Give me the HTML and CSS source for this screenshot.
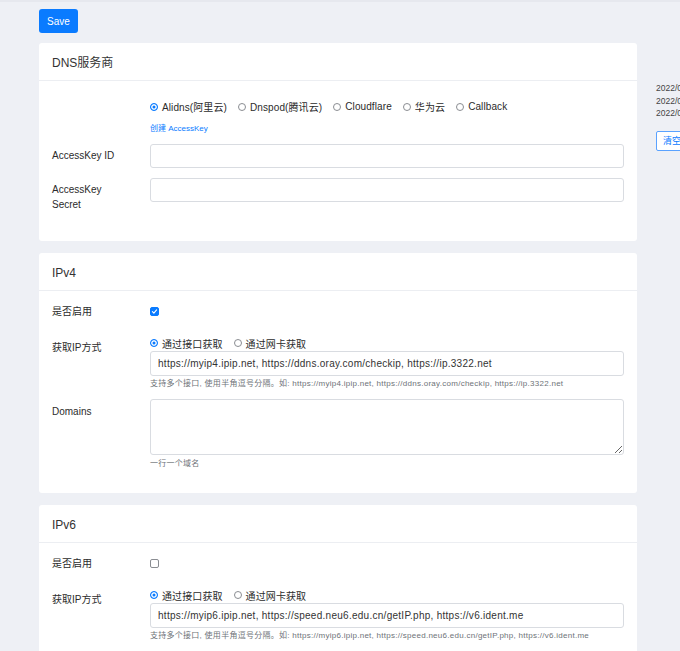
FILE: index.html
```html
<!DOCTYPE html>
<html lang="zh-CN">
<head>
<meta charset="utf-8">
<title>DDNS-GO</title>
<link rel="stylesheet" href="styles.css">
</head>
<body>
<div class="page">
  <div class="toolbar">
    <button class="btn-save" type="button">Save</button>
  </div>
  <div class="layout">
    <main class="main">
      <section class="card">
        <div class="card-header">DNS服务商</div>
        <div class="card-body">
          <div class="row">
            <div class="label"></div>
            <div class="field field-pad">
              <div class="choices">
                <label class="choice"><span class="radio checked"></span>Alidns(阿里云)</label>
                <label class="choice"><span class="radio"></span>Dnspod(腾讯云)</label>
                <label class="choice"><span class="radio"></span>Cloudflare</label>
                <label class="choice"><span class="radio"></span>华为云</label>
                <label class="choice"><span class="radio"></span>Callback</label>
              </div>
              <a class="link" href="#">创建 AccessKey</a>
            </div>
          </div>
          <div class="row">
            <div class="label">AccessKey ID</div>
            <div class="field"><input class="input" type="text"></div>
          </div>
          <div class="row">
            <div class="label">AccessKey Secret</div>
            <div class="field"><input class="input" type="password"></div>
          </div>
        </div>
      </section>

      <section class="card">
        <div class="card-header">IPv4</div>
        <div class="card-body">
          <div class="row row-check">
            <div class="label">是否启用</div>
            <div class="field field-check"><span class="checkbox checked"><svg viewBox="0 0 10 10" width="7" height="7"><path d="M2 5.2 L4.1 7.2 L8 2.8" fill="none" stroke="#fff" stroke-width="1.6" stroke-linecap="round" stroke-linejoin="round"/></svg></span></div>
          </div>
          <div class="row">
            <div class="label">获取IP方式</div>
            <div class="field">
              <div class="choices">
                <label class="choice"><span class="radio checked"></span>通过接口获取</label>
                <label class="choice"><span class="radio"></span>通过网卡获取</label>
              </div>
              <input class="input input-tall" type="text" value="https://myip4.ipip.net, https://ddns.oray.com/checkip, https://ip.3322.net">
              <div class="help">支持多个接口, 使用半角逗号分隔。如: https://myip4.ipip.net, https://ddns.oray.com/checkip, https://ip.3322.net</div>
            </div>
          </div>
          <div class="row">
            <div class="label">Domains</div>
            <div class="field">
              <textarea class="textarea"></textarea>
              <div class="help">一行一个域名</div>
            </div>
          </div>
        </div>
      </section>

      <section class="card">
        <div class="card-header">IPv6</div>
        <div class="card-body">
          <div class="row row-check">
            <div class="label">是否启用</div>
            <div class="field field-check"><span class="checkbox"></span></div>
          </div>
          <div class="row">
            <div class="label">获取IP方式</div>
            <div class="field">
              <div class="choices">
                <label class="choice"><span class="radio checked"></span>通过接口获取</label>
                <label class="choice"><span class="radio"></span>通过网卡获取</label>
              </div>
              <input class="input input-tall" type="text" value="https://myip6.ipip.net, https://speed.neu6.edu.cn/getIP.php, https://v6.ident.me">
              <div class="help">支持多个接口, 使用半角逗号分隔。如: https://myip6.ipip.net, https://speed.neu6.edu.cn/getIP.php, https://v6.ident.me</div>
            </div>
          </div>
          <div class="row">
            <div class="label">Domains</div>
            <div class="field">
              <textarea class="textarea"></textarea>
              <div class="help">一行一个域名</div>
            </div>
          </div>
        </div>
      </section>
    </main>

    <aside class="side">
      <div class="log">
        <div class="log-line">2022/04/02 15:30:21 你的IPv4未改变, 未触发请求</div>
        <div class="log-line">2022/04/02 15:35:21 你的IPv4未改变, 未触发请求</div>
        <div class="log-line">2022/04/02 15:40:21 你的IPv4未改变, 未触发请求</div>
      </div>
      <button class="btn-clear" type="button">清空日志</button>
    </aside>
  </div>
</div>
</body>
</html>
```

FILE: styles.css
```css
html, body {
  margin: 0;
  padding: 0;
  overflow: hidden;
}

body {
  background: #eef0f5;
  font-family: "Liberation Sans", "Noto Sans CJK SC", sans-serif;
  font-size: 10px;
  color: #2b2b2b;
  border-top: 2px solid #e6e8ee;
}

.page {
  width: 680px;
  overflow: hidden;
  padding: 7px 0 0 39px;
  box-sizing: border-box;
}

.toolbar {
  height: 24px;
}

.btn-save {
  height: 24px;
  width: 39px;
  padding: 0;
  border: none;
  border-radius: 3px;
  background: #0a7bff;
  color: #fff;
  font-family: inherit;
  font-size: 10px;
}

.layout {
  display: flex;
  gap: 19px;
  margin-top: 10px;
  width: 1000px;
}

.main {
  width: 598px;
  flex: none;
  display: flex;
  flex-direction: column;
  gap: 12px;
}

.card {
  background: #fff;
  border-radius: 3px;
}

.card-header {
  height: 34px;
  line-height: 34px;
  padding: 3px 13px 0;
  font-size: 12px;
  color: #333;
  border-bottom: 1px solid #eceef2;
}

.card-body {
  padding: 9px 13px 14px;
}

.row {
  display: flex;
  align-items: flex-start;
  margin-bottom: 10px;
}

.row-check {
  margin-bottom: 12px;
}

.label {
  width: 98px;
  flex: none;
  padding: 4.5px 0;
  line-height: 15px;
  padding-right: 30px;
  box-sizing: border-box;
  color: #2b2b2b;
}

.field {
  flex: 1;
  min-width: 0;
}

.field-pad {
  padding-top: 9px;
}

.field-check {
  height: 24px;
  display: flex;
  align-items: center;
}

.choices {
  display: flex;
  height: 15px;
  align-items: center;
  gap: 11px;
}

.choice {
  display: flex;
  align-items: center;
  gap: 4px;
  white-space: nowrap;
  letter-spacing: 0.1px;
}

.radio {
  width: 8px;
  height: 8px;
  box-sizing: border-box;
  border-radius: 50%;
  border: 1px solid #8a8d92;
  background: #fff;
  flex: none;
}

.radio.checked {
  border-color: #0a7bff;
  background: #0a7bff;
  box-shadow: inset 0 0 0 1.5px #fff;
}

.checkbox {
  width: 9px;
  height: 9px;
  box-sizing: border-box;
  border-radius: 2px;
  border: 1px solid #8a8d92;
  background: #fff;
  display: flex;
  align-items: center;
  justify-content: center;
}

.checkbox.checked {
  border-color: #0a7bff;
  background: #0a7bff;
}

.link {
  display: block;
  margin-top: 8.5px;
  font-size: 8px;
  line-height: 11px;
  color: #0a7bff;
  text-decoration: none;
}

.input {
  display: block;
  width: 100%;
  height: 24px;
  box-sizing: border-box;
  border: 1px solid #d9dce1;
  border-radius: 3px;
  padding: 0 7px;
  font-family: inherit;
  font-size: 10px;
  letter-spacing: 0.27px;
  color: #333;
  background: #fff;
  outline: none;
}

.input-tall {
  height: 25px;
}

.textarea {
  display: block;
  width: 100%;
  height: 56px;
  box-sizing: border-box;
  border: 1px solid #d9dce1;
  border-radius: 3px;
  padding: 5px 7px;
  font-family: inherit;
  font-size: 10px;
  margin: 0;
  outline: none;
}

.help {
  margin-top: 2.5px;
  font-size: 8px;
  line-height: 11px;
  letter-spacing: 0.27px;
  color: #6e7378;
  white-space: nowrap;
}

.side {
  padding-top: 39px;
  width: 300px;
}

.log-line {
  font-size: 8.5px;
  line-height: 12.5px;
  color: #444;
  white-space: nowrap;
}

.btn-clear {
  margin-top: 11px;
  height: 20px;
  padding: 0 6px;
  border: 1px solid #5aa2ff;
  border-radius: 2px;
  background: #fff;
  color: #0a7bff;
  font-family: inherit;
  font-size: 9px;
}
```
